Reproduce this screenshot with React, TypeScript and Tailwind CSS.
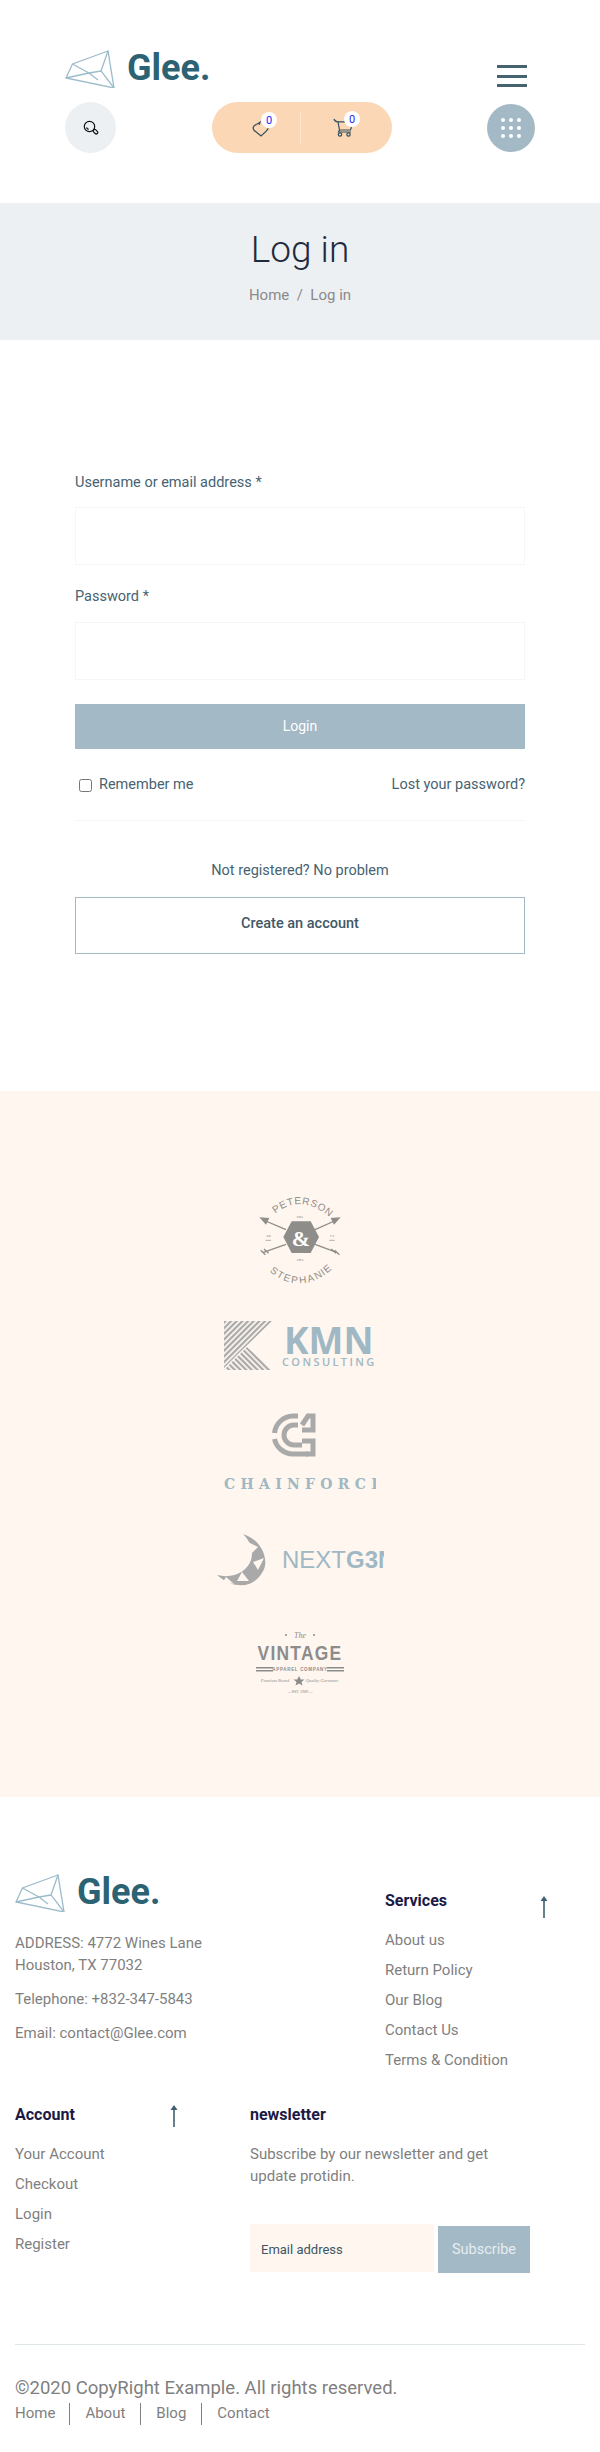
import React from "react";

const sans = "font-['Roboto',sans-serif]";

function GemMark() {
  return (
    <svg width="50" height="38" viewBox="0 0 50 38" fill="none" stroke="#9dbccb" strokeWidth="1.3" className="block shrink-0">
      <path d="M43 1 7.5 14 1 28 49 38Z" />
      <path d="M43 1 36 21 49 38M1 28 24 23 36 21M7.5 14 24 23 33 30" />
    </svg>
  );
}

function Logo() {
  return (
    <div className="flex h-[38px] items-center gap-[12px]">
      <GemMark />
      <span className="text-[36px] font-bold leading-[38px] text-[#2b6274] mt-[-2px]">Glee.</span>
    </div>
  );
}

function UpArrow() {
  return (
    <svg width="10" height="22" viewBox="0 0 10 22" fill="none" className="block shrink-0">
      <path d="M5 22V2" stroke="#3f6070" strokeWidth="1.6" />
      <path d="M5 0 8.5 5h-7Z" fill="#3f6070" />
    </svg>
  );
}

function Badge({ className }: { className: string }) {
  return (
    <span className={`absolute flex h-[16px] w-[16px] items-center justify-center rounded-full bg-white text-[11px] leading-none text-[#2a22ff] ${className}`}>
      0
    </span>
  );
}

function Header() {
  return (
    <header className="bg-white pt-[50px] pb-[50px] pl-[65px] pr-[65px]">
      <div className="flex h-[38px] justify-between">
        <Logo />
        <div className="mt-[15px] mr-[8px] flex h-[22px] w-[30px] flex-col justify-between">
          <span className="block h-[3px] bg-[#45646f]" />
          <span className="block h-[3px] bg-[#45646f]" />
          <span className="block h-[3px] bg-[#45646f]" />
        </div>
      </div>
      <div className="mt-[14px] flex h-[51px] items-start justify-between">
        <div className="flex h-[51px] w-[51px] items-center justify-center rounded-full bg-[#edf0f3]">
          <svg width="16" height="16" viewBox="0 0 16 16" fill="none" stroke="#111" strokeWidth="1.2">
            <circle cx="6.5" cy="6.5" r="5.2" />
            <path d="M3.5 7.5c.4 1 1.2 1.6 2.2 1.8" />
            <rect x="10" y="10.2" width="5" height="3" rx="1.5" transform="rotate(45 12.5 11.7)" />
          </svg>
        </div>
        <div className="ml-[1px] flex h-[51px] w-[180px] items-center rounded-[26px] bg-[#fcd7b6]">
          <div className="relative flex h-full w-[88px] items-center">
            <svg width="18" height="17" viewBox="0 0 18 17" fill="none" stroke="#35505c" strokeWidth="1.3" className="absolute left-[40px] top-[18px]">
              <path d="M4.5 4.5C1.5 5 .3 8 2 10.2L9 16l5-4.6 2.3-3" />
              <path d="M4.5 4.5 8 2.2l-.8 2.6" />
            </svg>
            <Badge className="left-[49px] top-[10px]" />
          </div>
          <div className="h-[32px] w-px bg-[#fde7d3]" />
          <div className="relative flex h-full flex-1 items-center">
            <svg width="20" height="19" viewBox="0 0 20 19" fill="none" stroke="#35505c" strokeWidth="1.2" className="absolute left-[32px] top-[16px]">
              <path d="M1 1c.6 2 2 2.8 4 2.8h8.5M5 3.8 6.5 12h11l1-3M6.5 12 5.5 14h12.5" />
              <circle cx="7" cy="16.5" r="1.7" />
              <circle cx="15.5" cy="16.5" r="1.7" />
            </svg>
            <Badge className="left-[43px] top-[9px]" />
          </div>
        </div>
        <div className="mt-[2px] grid h-[48px] w-[48px] grid-cols-3 content-center justify-items-center gap-y-[4px] rounded-full bg-[#a3b9c6] px-[12px]">
          {Array.from({ length: 9 }).map((_, i) => (
            <span key={i} className="block h-[4px] w-[4px] rounded-full bg-white" />
          ))}
        </div>
      </div>
    </header>
  );
}

function LoginForm() {
  return (
    <main className="bg-white px-[75px] pt-[133px] pb-[137px] text-[14.5px] text-[#476371]">
      <form>
        <label className="block h-[20px] leading-[20px]">Username or email address *</label>
        <input type="text" className="mt-[14px] block h-[58px] w-full border border-[#f6f6f6]" />
        <label className="mt-[22px] block h-[20px] leading-[20px]">Password *</label>
        <input type="password" className="mt-[15px] block h-[58px] w-full border border-[#f6f6f6]" />
        <button type="button" className="mt-[24px] block h-[45px] w-full bg-[#a3b9c6] text-[14px] text-white">Login</button>
        <div className="mt-[26px] flex h-[20px] items-center justify-between leading-[20px]">
          <label className="flex items-center">
            <input type="checkbox" className="mx-[4px] my-0 h-[13px] w-[13px]" />
            <span className="ml-[3px]">Remember me</span>
          </label>
          <a>Lost your password?</a>
        </div>
        <hr className="mt-[25px] border-[#f6f6f6]" />
      </form>
      <p className="mt-[40px] h-[20px] text-center leading-[20px]">Not registered? No problem</p>
      <button type="button" className="mt-[16px] block h-[57px] w-full border border-[#a3b9c6] pb-[3px] font-medium text-[#3f5866]">
        Create an account
      </button>
    </main>
  );
}

function PetersonLogo() {
  return (
    <svg width="90" height="90" viewBox="165 60 270 270" fill="#8f8d89" className="block">
      <defs>
        <path id="arcTop" d="M226 122Q300 62 384 128" fill="none" />
        <path id="arcBottom" d="M222 278Q300 345 382 272" fill="none" />
      </defs>
      <text fontFamily="Liberation Sans, sans-serif" fontSize="30" letterSpacing="2">
        <textPath href="#arcTop">PETERSON</textPath>
      </text>
      <text fontFamily="Liberation Sans, sans-serif" fontSize="30" letterSpacing="1">
        <textPath href="#arcBottom" startOffset="0" dominantBaseline="hanging">STEPHANIE</textPath>
      </text>
      <path d="M250 192 275 145h57l25 47-25 48h-57Z" />
      <text x="303" y="218" textAnchor="middle" fontFamily="Liberation Serif, serif" fontWeight="700" fontSize="66" fill="#fff">&amp;</text>
      <path d="M258 170 190 141M345 170 410 141M258 214 190 238M345 214 410 238" stroke="#8f8d89" strokeWidth="4" />
      <path d="M178 133 208 135 198 155ZM422 133 392 135 402 155Z" />
      <path d="M182 232 196 245M192 228 206 241M394 228 408 241M404 232 418 245" stroke="#8f8d89" strokeWidth="4" />
      <g fontFamily="Liberation Mono, monospace" fontSize="12" textAnchor="middle">
        <text x="300" y="135">VOL</text>
        <text x="205" y="192">19</text>
        <text x="396" y="192">72</text>
        <text x="300" y="265">251</text>
      </g>
      <path d="M197 202h16M388 202h16" stroke="#8f8d89" strokeWidth="2" />
    </svg>
  );
}

function KmnLogo() {
  return (
    <svg width="152" height="49" viewBox="0 0 152 49" className="block">
      <defs>
        <pattern id="stripeUp" width="4" height="4" patternUnits="userSpaceOnUse" patternTransform="rotate(45)">
          <rect width="2.2" height="4" fill="#a9a9a9" />
        </pattern>
        <pattern id="stripeDown" width="4" height="4" patternUnits="userSpaceOnUse" patternTransform="rotate(-45)">
          <rect width="2.2" height="4" fill="#a9a9a9" />
        </pattern>
      </defs>
      <path d="M0 0H48L16 31 0 47Z" fill="url(#stripeUp)" />
      <path d="M0 49 23 26 48 49Z" fill="url(#stripeDown)" />
      <text x="60" y="33" fontFamily="Open Sans, sans-serif" fontWeight="700" fontSize="37" fill="#9fb8c3">KMN</text>
      <text x="58" y="45" fontFamily="Open Sans, sans-serif" fontWeight="600" fontSize="11" letterSpacing="2.4" fill="#9fb8c3">CONSULTING</text>
    </svg>
  );
}

function ChainforceLogo() {
  return (
    <svg width="152" height="82" viewBox="0 0 152 82" className="block">
      <g fill="none" stroke="#a9a9a9" strokeWidth="5">
        <path d="M74 3H69A19 19 0 0 0 50.500 20M50.500 26A19 19 0 0 0 69 41H84" />
        <path d="M74 12H71A10 10 0 0 0 60 22A10 10 0 0 0 71 32H78" />
        <path d="M78 12 84 3H89V17H78M78 28H89V41H82" />
      </g>
      <text x="0" y="76" fontFamily="DejaVu Serif, serif" fontWeight="700" fontSize="14" letterSpacing="5.3" fill="#9fb8c3">CHAINFORCE</text>
    </svg>
  );
}

function NextLogo() {
  return (
    <svg width="167" height="52" viewBox="0 0 167 52" className="block">
      <path d="M0 0C16 4 24 22 21 34 16 50-4 60-26 46" transform="translate(26 0)" fill="none" />
      <path d="M26 0C42 5 50 20 48 32 43 50 22 60 0 41 16 45 30 38 34 26 37 16 33 7 26 0Z" fill="#a9a9a9" />
      <path d="M31 8 41 13 35 19ZM36 28 47 24 41 36ZM25 38 32 47 20 47ZM9 43 17 50 6 48Z" fill="#fef6ef" />
      <text x="65" y="34" fontFamily="Liberation Sans, sans-serif" fontSize="24" fill="#9fb8c3">
        NEXT<tspan fontWeight="700">G3N</tspan>
      </text>
    </svg>
  );
}

function VintageLogo() {
  return (
    <svg width="88" height="66" viewBox="0 0 88 66" fill="#8c8c8c" className="block">
      <text x="44" y="8" textAnchor="middle" fontFamily="Liberation Serif, serif" fontStyle="italic" fontSize="8">The</text>
      <circle cx="30" cy="5" r="1" />
      <circle cx="58" cy="5" r="1" />
      <text x="44" y="30" textAnchor="middle" fontFamily="Liberation Sans, sans-serif" fontWeight="700" fontSize="20" letterSpacing="1.5" textLength="85" lengthAdjust="spacingAndGlyphs">VINTAGE</text>
      <path d="M0 37H17V38.500H0ZM0 40H17V41.500H0ZM71 37H88V38.500H71ZM71 40H88V41.500H71Z" />
      <text x="44" y="41" textAnchor="middle" fontFamily="Liberation Sans, sans-serif" fontWeight="700" fontSize="4.500" letterSpacing=".7">APPAREL COMPANY</text>
      <text x="19" y="52" textAnchor="middle" fontFamily="Liberation Serif, serif" fontStyle="italic" fontSize="4.500">Premium Brand</text>
      <text x="66" y="52" textAnchor="middle" fontFamily="Liberation Serif, serif" fontStyle="italic" fontSize="4.500">Quality Garments</text>
      <path d="M43 46 44.800 49.500H48.500L45.500 52 46.500 55.500 43 53.500 39.500 55.500 40.500 52 37.500 49.500H41.200Z" />
      <text x="44" y="63" textAnchor="middle" fontFamily="Liberation Sans, sans-serif" fontSize="3.500">— EST. 1969 —</text>
    </svg>
  );
}

function Logos() {
  return (
    <section className="flex flex-col items-center bg-[#fef6ef] pt-[102px] pb-[101px]">
      <PetersonLogo />
      <div className="mt-[38px]"><KmnLogo /></div>
      <div className="mt-[43px]"><ChainforceLogo /></div>
      <div className="mt-[39px]"><NextLogo /></div>
      <div className="mt-[44px]"><VintageLogo /></div>
    </section>
  );
}

function LinkList({ items }: { items: string[] }) {
  return (
    <ul className="mt-[14px]">
      {items.map((item) => (
        <li key={item} className="h-[30px] leading-[30px]">{item}</li>
      ))}
    </ul>
  );
}

function Footer() {
  return (
    <footer className="bg-white px-[15px] pt-[77px] text-[15px] text-[#7f7f7f]">
      <div className="flex">
        <div className="w-[370px]">
          <Logo />
          <p className="mt-[20px] leading-[22px]">ADDRESS: 4772 Wines Lane<br />Houston, TX 77032</p>
          <p className="mt-[12px] leading-[22px]">Telephone: +832-347-5843</p>
          <p className="mt-[12px] leading-[22px]">Email: contact@Glee.com</p>
        </div>
        <div className="mt-[17px] mb-[30px] flex-1">
          <div className="flex h-[20px] w-[164px] justify-between">
            <h4 className="text-[16px] font-bold leading-[20px] text-[#1b1a45]">Services</h4>
            <div className="mt-[5px]"><UpArrow /></div>
          </div>
          <LinkList items={["About us", "Return Policy", "Our Blog", "Contact Us", "Terms & Condition"]} />
        </div>
      </div>
      <div className="flex">
        <div className="w-[235px]">
          <div className="flex h-[20px] w-[164px] justify-between">
            <h4 className="text-[16px] font-bold leading-[20px] text-[#1b1a45]">Account</h4>
            <div><UpArrow /></div>
          </div>
          <LinkList items={["Your Account", "Checkout", "Login", "Register"]} />
        </div>
        <div className="flex-1">
          <h4 className="text-[16px] font-bold leading-[20px] text-[#1b1a45]">newsletter</h4>
          <p className="mt-[18px] leading-[22px]">Subscribe by our newsletter and get<br />update protidin.</p>
          <form className="mt-[37px] flex items-start">
            <input
              type="text"
              placeholder="Email address"
              className="h-[48px] w-[184px] bg-[#fef6ef] pt-[3px] pl-[11px] text-[13px] placeholder:text-[#3d5666]"
            />
            <button type="button" className="mt-[2px] ml-[4px] h-[47px] w-[92px] bg-[#a3b9c6] text-[14.5px] text-[#e6edf0]">
              Subscribe
            </button>
          </form>
        </div>
      </div>
      <div className="mt-[71px] h-px bg-[#dfe7e9]" />
      <p className="mt-[31px] text-[18.5px] leading-[24px]">©2020 CopyRight Example. All rights reserved.</p>
      <div className="mt-[3px] flex pb-[28px]">
        {["Home", "About", "Blog", "Contact"].map((item, i) => (
          <a
            key={item}
            className={
              i === 3
                ? "h-[22px] pl-[15px] leading-[20px]"
                : i === 0
                  ? "h-[22px] border-r border-[#7f7f7f] pr-[14px] leading-[20px]"
                  : "h-[22px] border-r border-[#7f7f7f] px-[15px] leading-[20px]"
            }
          >
            {item}
          </a>
        ))}
      </div>
    </footer>
  );
}

export default function App() {
  return (
    <div className={`w-[600px] bg-white ${sans}`}>
      <Header />
      <section className="h-[137px] bg-[#edf0f3] pt-[25px] text-center">
        <h1 className="text-[37px] font-light leading-[44px] text-[#1f2a3d]">Log in</h1>
        <p className="mt-[13px] text-[15px] leading-[20px] text-[#8a8a8a]">Home&nbsp; /&nbsp; Log in</p>
      </section>
      <LoginForm />
      <Logos />
      <Footer />
    </div>
  );
}
